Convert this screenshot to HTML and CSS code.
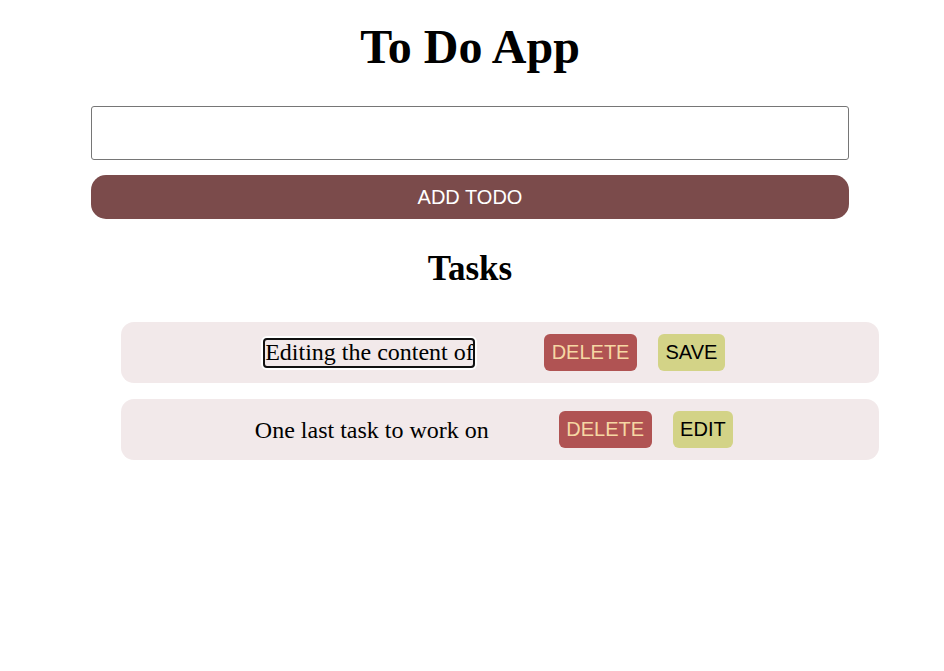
FILE: index.html
```html
<!DOCTYPE html>
<html lang="en">
<head>
<meta charset="utf-8">
<title>To Do App</title>
<link rel="stylesheet" href="styles.css">
</head>
<body>
<div class="app">
  <h1 class="title">To Do App</h1>
  <form class="add-form">
    <input class="new-input" type="text">
    <button class="add-btn" type="button">ADD TODO</button>
  </form>
  <h2 class="subtitle">Tasks</h2>
  <ul class="list">
    <li class="item">
      <input class="edit-input" type="text" value="Editing the content of the first task">
      <button class="btn btn-delete" type="button">DELETE</button>
      <button class="btn btn-action" type="button">SAVE</button>
    </li>
    <li class="item">
      <span class="item-text">One last task to work on</span>
      <button class="btn btn-delete" type="button">DELETE</button>
      <button class="btn btn-action" type="button">EDIT</button>
    </li>
  </ul>
</div>
</body>
</html>
```
FILE: styles.css
```css
html, body {
  margin: 0;
  padding: 0;
  background: #ffffff;
}

body {
  font-family: "Liberation Serif", "Times New Roman", serif;
  color: #000;
}

.app {
  width: 758px;
  margin: 0 0 0 91px;
  padding-top: 19px;
}

.title {
  margin: 0;
  font-size: 48px;
  line-height: 55px;
  font-weight: bold;
  text-align: center;
}

.add-form {
  display: flex;
  flex-direction: column;
  gap: 15px;
  margin-top: 32px;
}

.new-input {
  box-sizing: border-box;
  width: 100%;
  height: 54px;
  margin: 0;
  border: 1px solid #767676;
  border-radius: 3px;
  background: #fff;
  font-size: 20px;
  padding: 0 8px;
}

.add-btn {
  box-sizing: border-box;
  width: 100%;
  height: 44px;
  margin: 0;
  border: none;
  border-radius: 15px;
  background: #7b4b4b;
  color: #ffffff;
  font-family: "Liberation Sans", Arial, sans-serif;
  font-size: 20px;
}

.subtitle {
  margin: 30px 0 0;
  font-size: 35px;
  line-height: 40px;
  font-weight: bold;
  text-align: center;
}

.list {
  list-style: none;
  width: 758px;
  margin: 33px 0 0 30px;
  padding: 0;
  display: flex;
  flex-direction: column;
  gap: 16px;
}

.item {
  display: flex;
  align-items: center;
  justify-content: center;
  height: 61px;
  box-sizing: border-box;
  padding: 12px 24px 12px 12px;
  border-radius: 13px;
  background: #f2e9ea;
}

.item-text {
  font-size: 24px;
  line-height: 28px;
  margin-right: 70px;
}

.edit-input {
  box-sizing: border-box;
  width: 212px;
  height: 30px;
  margin: 0 69px 0 0;
  padding: 0;
  border: 2px solid #111;
  border-radius: 4px;
  box-shadow: 0 0 0 2px #ffffff;
  background: transparent;
  font-family: "Liberation Serif", "Times New Roman", serif;
  font-size: 24px;
  color: #000;
  outline: none;
}

.btn {
  margin: 0;
  border: none;
  border-radius: 6px;
  padding: 7px 7.5px;
  font-family: "Liberation Sans", Arial, sans-serif;
  font-size: 20px;
  line-height: 23px;
}

.btn-delete {
  background: #b05353;
  color: #f6d7a3;
  margin-right: 21px;
}

.btn-action {
  background: #d3d387;
  color: #000;
}
```
